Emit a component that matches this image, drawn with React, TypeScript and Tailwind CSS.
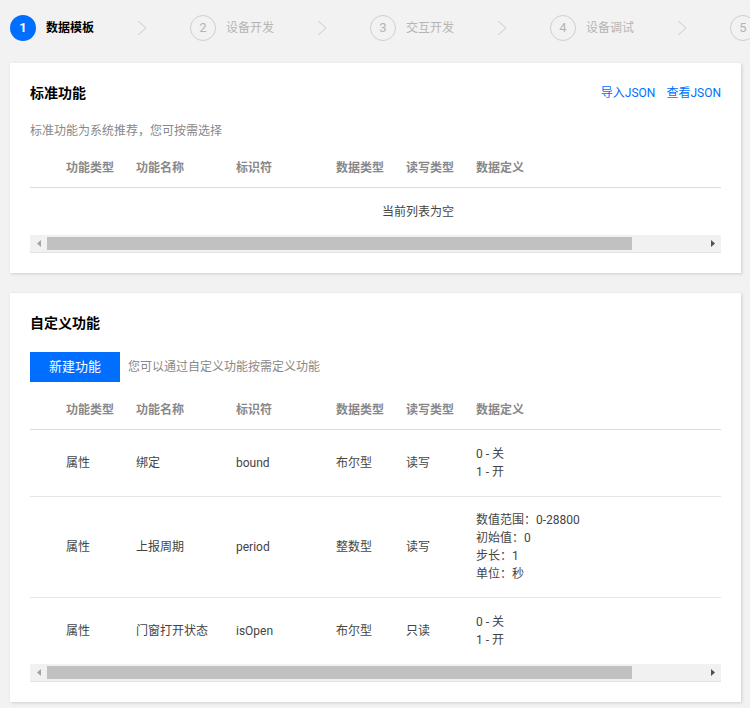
import React from "react";

const steps = ["数据模板", "设备开发", "交互开发", "设备调试", "批量投产"];

const columns = [
  { title: "功能类型", width: "w-[70px]" },
  { title: "功能名称", width: "w-[100px]" },
  { title: "标识符", width: "w-[100px]" },
  { title: "数据类型", width: "w-[70px]" },
  { title: "读写类型", width: "w-[70px]" },
  { title: "数据定义", width: "w-[300px]" },
];

const rows = [
  { type: "属性", name: "绑定", id: "bound", dataType: "布尔型", mode: "读写", def: ["0 - 关", "1 - 开"] },
  {
    type: "属性",
    name: "上报周期",
    id: "period",
    dataType: "整数型",
    mode: "读写",
    def: ["数值范围：0-28800", "初始值：0", "步长：1", "单位：秒"],
  },
  { type: "属性", name: "门窗打开状态", id: "isOpen", dataType: "布尔型", mode: "只读", def: ["0 - 关", "1 - 开"] },
];

function Steps() {
  return (
    <div className="-mr-[10px] flex h-[56px] items-center overflow-hidden whitespace-nowrap">
      {steps.map((label, i) => {
        const active = i === 0;
        return (
          <div key={label} className="flex shrink-0 items-center">
            <div
              className={
                active
                  ? "flex h-[26px] w-[26px] items-center justify-center rounded-full bg-[#006eff] text-[13px] font-bold text-white"
                  : "flex h-[26px] w-[26px] items-center justify-center rounded-full border border-[#cfcfcf] text-[13px] text-[#b5b5b5]"
              }
            >
              {i + 1}
            </div>
            <span
              className={
                active
                  ? "ml-[10px] w-[48px] text-[12px] font-bold text-black"
                  : "ml-[10px] w-[48px] text-[12px] text-[#b5b5b5]"
              }
            >
              {label}
            </span>
            <div className="flex w-[96px] justify-center">
              <svg width="10" height="16" viewBox="0 0 10 16" fill="none">
                <path d="M1 1l8 7-8 7" stroke="#cccccc" strokeWidth="1" />
              </svg>
            </div>
          </div>
        );
      })}
    </div>
  );
}

function ScrollBar() {
  return (
    <div className="flex h-[18px] items-center border-b border-[#e3e3e3] bg-[#f1f1f1]">
      <div className="flex w-[17px] justify-center">
        <svg width="4" height="7" viewBox="0 0 4 7">
          <path d="M4 0v7L0 3.5z" fill="#a3a3a3" />
        </svg>
      </div>
      <div className="h-[13px] w-[585px] bg-[#c1c1c1]" />
      <div className="flex-1" />
      <div className="flex w-[17px] justify-center">
        <svg width="4" height="7" viewBox="0 0 4 7">
          <path d="M0 0v7l4-3.5z" fill="#505050" />
        </svg>
      </div>
    </div>
  );
}

function HeaderRow() {
  return (
    <div className="flex h-[41px] items-center border-b border-[#dcdcdc] pl-[26px] pt-[2px]">
      {columns.map((c) => (
        <div key={c.title} className={`${c.width} shrink-0 px-[10px] text-[12px] font-bold text-[#888]`}>
          {c.title}
        </div>
      ))}
    </div>
  );
}

function Card({ children }: { children: React.ReactNode }) {
  return (
    <div className="w-[731px] bg-white px-[20px] pb-[20px] pt-[20px] shadow-[1px_1px_3px_rgba(0,0,0,0.15)]">
      {children}
    </div>
  );
}

export default function App() {
  return (
    <div
      className="min-h-[708px] overflow-hidden bg-[#f2f2f2] px-[10px] pb-[10px]"
      style={{ fontFamily: 'Roboto, "Noto Sans CJK SC", sans-serif' }}
    >
      <Steps />

      <div className="mt-[7px]">
        <Card>
          <div className="flex h-[20px] items-center justify-between">
            <h2 className="text-[14px] font-bold text-black">标准功能</h2>
            <div className="flex gap-[11px] text-[12px] text-[#006eff]">
              <a>导入JSON</a>
              <a>查看JSON</a>
            </div>
          </div>
          <p className="mt-[19px] h-[18px] text-[12px] leading-[18px] text-[#888]">
            标准功能为系统推荐，您可按需选择
          </p>
          <div className="mt-[7px]">
            <HeaderRow />
            <div className="flex h-[47px] items-center pl-[352px] text-[12px] text-[#444]">当前列表为空</div>
            <ScrollBar />
          </div>
        </Card>
      </div>

      <div className="mt-[20px]">
        <Card>
          <h2 className="flex h-[20px] items-center text-[14px] font-bold text-black">自定义功能</h2>
          <div className="mt-[19px] flex items-center">
            <button className="h-[30px] w-[90px] bg-[#006eff] text-[13px] text-white">新建功能</button>
            <span className="ml-[8px] text-[12px] text-[#888]">您可以通过自定义功能按需定义功能</span>
          </div>
          <div className="mt-[7px]">
            <HeaderRow />
            {rows.map((r, idx) => (
              <div
                key={r.id}
                className={
                  idx === 0
                    ? "flex items-center border-b border-[#e5e5e5] py-[15px] pl-[26px] text-[12px] leading-[18px] text-[#444]"
                    : idx === 1
                      ? "flex items-center border-b border-[#e5e5e5] py-[14px] pl-[26px] text-[12px] leading-[18px] text-[#444]"
                      : "flex items-center py-[15px] pl-[26px] text-[12px] leading-[18px] text-[#444]"
                }
              >
                <div className="w-[70px] shrink-0 px-[10px]">{r.type}</div>
                <div className="w-[100px] shrink-0 whitespace-nowrap px-[10px]">{r.name}</div>
                <div className="w-[100px] shrink-0 px-[10px]">{r.id}</div>
                <div className="w-[70px] shrink-0 px-[10px]">{r.dataType}</div>
                <div className="w-[70px] shrink-0 px-[10px]">{r.mode}</div>
                <div className="w-[300px] shrink-0 px-[10px]">
                  {r.def.map((d) => (
                    <div key={d}>{d}</div>
                  ))}
                </div>
              </div>
            ))}
            <ScrollBar />
          </div>
        </Card>
      </div>
    </div>
  );
}
